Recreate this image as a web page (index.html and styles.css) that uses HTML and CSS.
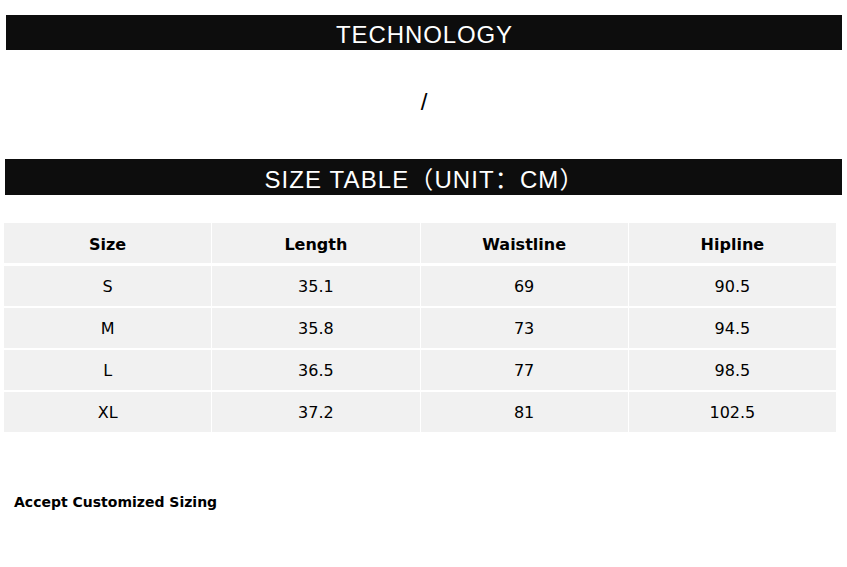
FILE: index.html
```html
<!DOCTYPE html>
<html>
<head>
<meta charset="utf-8">
<link rel="stylesheet" href="styles.css">
</head>
<body>
<div class="page">
  <div class="bar bar-tech"><span class="bar-text tech-text">TECHNOLOGY</span></div>
  <div class="slash">/</div>
  <div class="bar bar-size"><span class="bar-text size-text">SIZE TABLE（UNIT：CM）</span></div>
  <div class="table">
    <div class="cell head">Size</div><div class="cell head">Length</div><div class="cell head">Waistline</div><div class="cell head">Hipline</div>
    <div class="cell">S</div><div class="cell">35.1</div><div class="cell">69</div><div class="cell">90.5</div>
    <div class="cell">M</div><div class="cell">35.8</div><div class="cell">73</div><div class="cell">94.5</div>
    <div class="cell">L</div><div class="cell">36.5</div><div class="cell">77</div><div class="cell">98.5</div>
    <div class="cell">XL</div><div class="cell">37.2</div><div class="cell">81</div><div class="cell">102.5</div>
  </div>
  <div class="note">Accept Customized Sizing</div>
</div>
</body>
</html>
```
FILE: styles.css
```css
html, body {
  margin: 0;
  padding: 0;
  background: #ffffff;
}
.page {
  width: 847px;
  padding-top: 15px;
  font-family: "DejaVu Sans", Verdana, sans-serif;
  color: #000;
}
.bar {
  background: #0d0d0d;
  height: 35px;
  display: flex;
  align-items: center;
  justify-content: center;
  overflow: hidden;
}
.bar-tech {
  margin: 0 5px 0 6px;
}
.bar-size {
  margin: 0 5px 0 5px;
  height: 36px;
}
.bar-text {
  color: #ffffff;
  font-family: "Liberation Sans", Arial, "Noto Sans CJK SC", sans-serif;
  font-size: 24px;
  line-height: 30px;
  display: inline-block;
  white-space: nowrap;
  padding-top: 5px;
}
.tech-text {
  letter-spacing: 0.9px;
  padding-left: 1px;
}
.size-text {
  letter-spacing: 1.1px;
  padding-top: 6px;
  padding-left: 2px;
}
.slash {
  height: 109px;
  text-align: center;
  font-family: "Liberation Sans", Arial, sans-serif;
  font-size: 24px;
  line-height: 104px;
  padding-left: 1px;
}
.table {
  margin: 28px 11px 0 4px;
  display: grid;
  grid-template-columns: repeat(4, 1fr);
  column-gap: 1px;
  row-gap: 2px;
}
.cell {
  background: #f1f1f1;
  height: 40px;
  display: flex;
  align-items: center;
  justify-content: center;
  font-size: 16px;
  color: #000;
  padding-top: 1px;
  box-sizing: border-box;
}
.head {
  font-weight: bold;
  margin-bottom: 1px;
  padding-top: 3px;
}
.note {
  margin: 62px 0 0 14px;
  font-weight: bold;
  font-size: 14px;
}
```
